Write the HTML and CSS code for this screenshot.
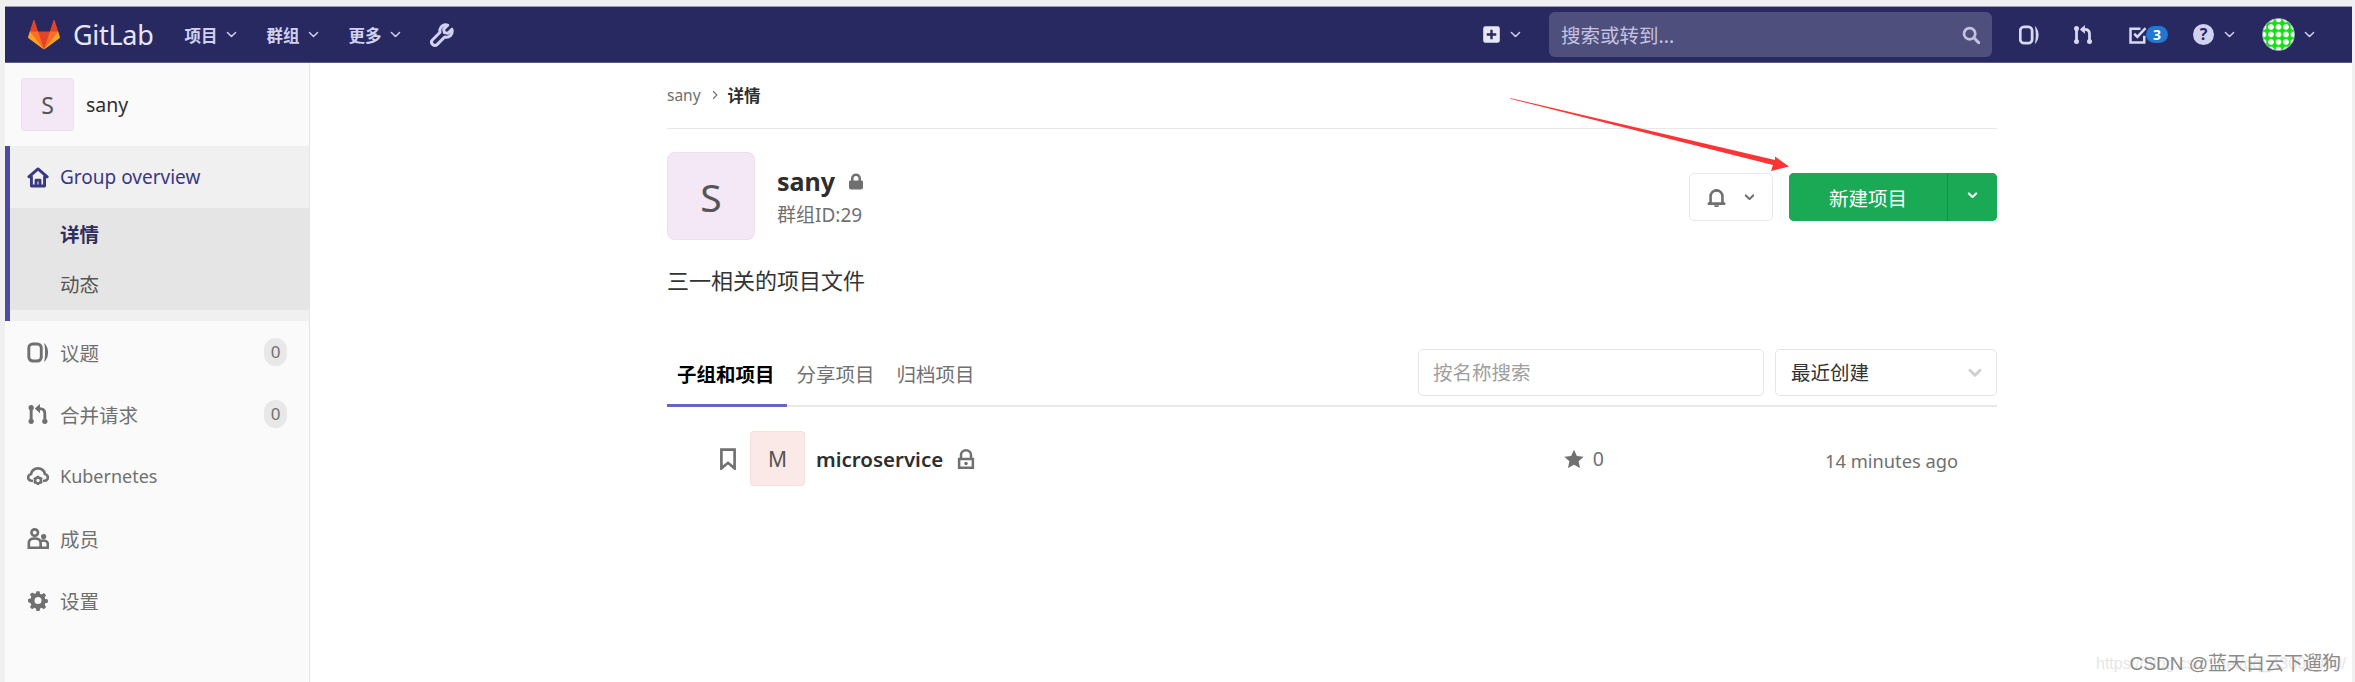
FILE: index.html
```html
<!DOCTYPE html>
<html lang="zh-CN">
<head>
    <meta charset="UTF-8">
    <title>sany · GitLab</title>
    <link rel="stylesheet" href="styles.css">
</head>
<body>
    <svg class="icon-defs" width="0" height="0">
        <symbol id="i-chevron" viewBox="0 0 16 16"><path d="M3 5.500l5 5 5-5" fill="none" stroke="currentColor" stroke-width="1.800" stroke-linecap="round" stroke-linejoin="round"/></symbol>
        <symbol id="i-chevron-bold" viewBox="0 0 16 16"><path d="M3.500 5.500L8 10l4.500-4.500" fill="none" stroke="currentColor" stroke-width="2.600" stroke-linecap="round" stroke-linejoin="round"/></symbol>
        <symbol id="i-issues" viewBox="0 0 16 16"><rect x="1" y="1.500" width="9.500" height="13" rx="3" fill="none" stroke="currentColor" stroke-width="2.200"/><path d="M13.500 2.500c1.200 1.500 1.700 3.500 1.700 5.500s-.5 4-1.700 5.500c.3-1.800.4-3.600.4-5.500s-.1-3.700-.4-5.500z" fill="currentColor" stroke="currentColor" stroke-width="1"/></symbol>
        <symbol id="i-mr" viewBox="0 0 16 16"><g fill="currentColor"><circle cx="2.800" cy="2.800" r="2"/><circle cx="2.800" cy="13.200" r="2"/><circle cx="13.200" cy="13.200" r="2"/><path d="M9.500 0v7L5.500 3.500z"/></g><path d="M2.800 3v10M13.200 13V7c0-2-1-3.500-4-3.500" fill="none" stroke="currentColor" stroke-width="2.200"/></symbol>
        <symbol id="i-home" viewBox="0 0 16 16"><path d="M8 1.500L15 7.500h-2v7H3v-7H1zM6.500 14.500V10h3v4.500" fill="none" stroke="currentColor" stroke-width="2.200" stroke-linejoin="round"/></symbol>
        <symbol id="i-cloud" viewBox="0 0 16 16"><path d="M3.500 11.200H3A2.500 2.500 0 0 1 1 7.200c.4-.6 1-1 1.700-1.100C3.300 3.600 5.400 1.800 8 1.800s4.700 1.800 5.300 4.300c.7.100 1.300.5 1.700 1.100a2.500 2.500 0 0 1-2 4h-.5" fill="none" stroke="currentColor" stroke-width="2" stroke-linecap="round"/><circle cx="8" cy="11" r="2.200" fill="none" stroke="currentColor" stroke-width="1.800"/><path d="M8 7.500v1.300M8 13.200v1.300M4.700 9.200l1.200.7M10.100 12.100l1.200.7M11.300 9.200l-1.200.7M5.900 12.100l-1.200.7" stroke="currentColor" stroke-width="1.500"/></symbol>
        <symbol id="i-users" viewBox="0 0 16 16"><circle cx="5.500" cy="3.500" r="2.500" fill="none" stroke="currentColor" stroke-width="2"/><circle cx="12.300" cy="6.500" r="2" fill="currentColor"/><path d="M1 15v-3.500C1 9.500 2.500 8 5.500 8s4.500 1.500 4.500 3.500V15zM10 15h5.500v-2.500c0-1.600-1.200-3-3.200-3-.9 0-1.600.2-2.300.7" fill="none" stroke="currentColor" stroke-width="2"/></symbol>
        <symbol id="i-gear" viewBox="-1 -1 18 18"><path fill="currentColor" fill-rule="evenodd" d="M6.700 0h2.600l.5 2.200 1.300.6 2-1.200 1.800 1.800-1.200 2 .6 1.300 2.200.5v2.600l-2.200.5-.6 1.300 1.200 2-1.800 1.800-2-1.200-1.300.6-.5 2.200H6.700l-.5-2.200-1.300-.6-2 1.200-1.800-1.800 1.200-2-.6-1.300L-.5 9.300V6.700l2.200-.5.6-1.300-1.200-2 1.800-1.800 2 1.200 1.300-.6zM8 5a3 3 0 1 0 0 6 3 3 0 0 0 0-6z"/></symbol>
        <symbol id="i-lock-solid" viewBox="0 0 16 16"><path fill="currentColor" fill-rule="evenodd" d="M3 7V5a5 5 0 0 1 10 0v2h.5c.8 0 1.500.7 1.500 1.500V14c0 1.100-.9 2-2 2H3c-1.100 0-2-.9-2-2V8.500C1 7.700 1.700 7 2.500 7zm2.500 0h5V5a2.500 2.500 0 0 0-5 0z"/></symbol>
        <symbol id="i-lock-open" viewBox="0 0 16 16"><path fill="currentColor" fill-rule="evenodd" d="M3 7V5a5 5 0 0 1 10 0v2h1.500v9h-13V7zm2 0h6V5a3 3 0 0 0-6 0zM3.500 9v5h9V9z"/><circle cx="8" cy="11.500" r="1.400" fill="currentColor"/></symbol>
    </svg>

    <div class="screen">
        <!-- top bar -->
        <header class="navbar">
            <div class="nav-left">
                <a class="brand">
                    <svg class="tanuki" viewBox="0 0 36 36">
                        <path fill="#e24329" d="M2 14l9.380 9v-9l-4-12.280c-.205-.632-1.176-.632-1.380 0z"/>
                        <path fill="#e24329" d="M34 14l-9.380 9v-9l4-12.280c.205-.632 1.176-.632 1.380 0z"/>
                        <path fill="#e24329" d="M18 34.380L3 14h30z"/>
                        <path fill="#fc6d26" d="M18 34.380L11.380 14H2l4 11z"/>
                        <path fill="#fc6d26" d="M18 34.380L24.620 14H34l-4 11z"/>
                        <path fill="#fca326" d="M2 14L.1 20.160c-.18.565 0 1.200.5 1.560l17.420 12.660z"/>
                        <path fill="#fca326" d="M34 14l1.900 6.160c.18.565 0 1.200-.5 1.560L18 34.380z"/>
                    </svg>
                    <span class="brand-name">GitLab</span>
                </a>
                <a class="nav-link">项目<svg class="caret"><use href="#i-chevron"/></svg></a>
                <a class="nav-link">群组<svg class="caret"><use href="#i-chevron"/></svg></a>
                <a class="nav-link">更多<svg class="caret"><use href="#i-chevron"/></svg></a>
                <svg class="wrench" viewBox="0 0 16 16"><path d="M14.600 4.200l-2.700 2.700-2.300-.5-.5-2.300 2.700-2.700c-2.200-.7-4.800.4-5.200 3-.1.700 0 1.300.1 1.800L1.600 11.300c-.8.800-.8 2 0 2.800l.3.300c.8.800 2 .8 2.800 0l5.100-5.100c2.800.7 5.800-1.400 4.800-5.100z" fill="none" stroke="currentColor" stroke-width="2" stroke-linejoin="round"/></svg>
            </div>
            <div class="nav-right">
                <div class="new-menu">
                    <svg class="plus-box" viewBox="0 0 16 16"><path fill="currentColor" fill-rule="evenodd" d="M3 1h10a2 2 0 0 1 2 2v10a2 2 0 0 1-2 2H3a2 2 0 0 1-2-2V3a2 2 0 0 1 2-2zm4 3v3H4v2h3v3h2V9h3V7H9V4z"/></svg>
                    <svg class="caret"><use href="#i-chevron"/></svg>
                </div>
                <div class="nav-search">
                    <span>搜索或转到...</span>
                    <svg class="search-icon" viewBox="0 0 16 16"><circle cx="6.800" cy="6.800" r="5" fill="none" stroke="currentColor" stroke-width="2.400"/><path d="M10.500 10.500L15 15" stroke="currentColor" stroke-width="2.600" stroke-linecap="round"/></svg>
                </div>
                <svg class="nav-icon nav-issues"><use href="#i-issues"/></svg>
                <svg class="nav-icon nav-mr"><use href="#i-mr"/></svg>
                <div class="todos">
                    <svg class="nav-icon" viewBox="0 0 16 16"><path d="M13 8.500V14H2V3h8" fill="none" stroke="currentColor" stroke-width="2"/><path d="M5 7l2.500 2.500L14 2.500" fill="none" stroke="currentColor" stroke-width="2"/></svg>
                    <span class="todo-badge">3</span>
                </div>
                <div class="help">
                    <span class="help-mark">?</span>
                    <svg class="caret"><use href="#i-chevron"/></svg>
                </div>
                <div class="user-menu">
                    <span class="user-avatar"></span>
                    <svg class="caret"><use href="#i-chevron"/></svg>
                </div>
            </div>
        </header>

        <div class="layout">
            <!-- left sidebar -->
            <aside class="sidebar">
                <div class="context">
                    <span class="avatar avatar-side">S</span>
                    <span class="context-name">sany</span>
                </div>
                <div class="nav-section">
                    <a class="side-item side-item-active"><svg class="side-icon"><use href="#i-home"/></svg>Group overview</a>
                    <ul class="side-sub">
                        <li class="sub-active">详情</li>
                        <li>动态</li>
                    </ul>
                </div>
                <a class="side-item"><svg class="side-icon"><use href="#i-issues"/></svg>议题<span class="count">0</span></a>
                <a class="side-item"><svg class="side-icon"><use href="#i-mr"/></svg>合并请求<span class="count">0</span></a>
                <a class="side-item side-latin"><svg class="side-icon"><use href="#i-cloud"/></svg>Kubernetes</a>
                <a class="side-item"><svg class="side-icon"><use href="#i-users"/></svg>成员</a>
                <a class="side-item"><svg class="side-icon"><use href="#i-gear"/></svg>设置</a>
            </aside>

            <main class="content">
                <div class="container">
                    <nav class="breadcrumb">
                        <span class="crumb">sany</span>
                        <svg class="crumb-sep" viewBox="0 0 16 16"><path d="M5.500 3l5 5-5 5" fill="none" stroke="currentColor" stroke-width="1.500"/></svg>
                        <span class="crumb-current">详情</span>
                    </nav>

                    <section class="group-head">
                        <span class="avatar avatar-group">S</span>
                        <div class="group-info">
                            <h1 class="group-name">sany<svg class="group-lock"><use href="#i-lock-solid"/></svg></h1>
                            <div class="group-id">群组ID:29</div>
                        </div>
                        <div class="group-actions">
                            <button class="bell-btn">
                                <svg class="bell" viewBox="0 0 16 16"><path d="M3 12V7a5 5 0 0 1 10 0v5l1.500 1.200h-13z" fill="none" stroke="currentColor" stroke-width="2.200" stroke-linejoin="round"/><path d="M6 14.500h4a2 2 0 0 1-4 0zM7 1h2v2H7z" fill="currentColor"/></svg>
                                <svg class="caret-bold"><use href="#i-chevron-bold"/></svg>
                            </button>
                            <div class="split-btn">
                                <button class="new-project">新建项目</button>
                                <button class="new-toggle"><svg class="caret-bold"><use href="#i-chevron-bold"/></svg></button>
                            </div>
                        </div>
                    </section>

                    <p class="group-desc">三一相关的项目文件</p>

                    <div class="tabs">
                        <ul class="tab-list">
                            <li class="tab tab-active">子组和项目</li>
                            <li class="tab">分享项目</li>
                            <li class="tab">归档项目</li>
                        </ul>
                        <div class="filters">
                            <div class="filter-input">按名称搜索</div>
                            <div class="filter-select">最近创建<svg class="select-caret"><use href="#i-chevron-bold"/></svg></div>
                        </div>
                    </div>

                    <div class="project-row">
                        <svg class="bookmark" viewBox="0 0 16 20"><path d="M2 1.500h12v17l-6-5-6 5z" fill="none" stroke="currentColor" stroke-width="2.400"/></svg>
                        <span class="avatar avatar-project">M</span>
                        <span class="project-name">microservice</span>
                        <svg class="project-lock"><use href="#i-lock-open"/></svg>
                        <span class="project-stars">
                            <svg class="star" viewBox="0 0 16 16"><path fill="currentColor" d="M8 .5l2.300 5 5.400.6-4 3.700 1.100 5.400L8 12.500l-4.800 2.700 1.100-5.400-4-3.700 5.400-.6z"/></svg>
                            0
                        </span>
                        <span class="project-time">14 minutes ago</span>
                    </div>
                </div>
            </main>
        </div>

        <div class="watermark">
            <span class="watermark-url">https://blog.csdn.net/qq_43000000/</span>
            <span class="watermark-name">CSDN @蓝天白云下遛狗</span>
        </div>
    </div>

    <!-- red annotation arrow drawn over the page -->
    <svg class="annotation" viewBox="0 0 2355 682">
        <path fill="#fb3535" d="M1510 98L1511 99 1773 165 1771 171 1789 166.500 1775 156.500 1775 160z"/>
    </svg>
</body>
</html>
```

FILE: styles.css
```css
* {
    box-sizing: border-box;
}
html, body {
    margin: 0;
    height: 100%;
    overflow: hidden;
}
body {
    font-family: "Noto Sans", "Noto Sans CJK SC", sans-serif;
    font-size: 19.5px;
    color: #2e2e2e;
    background-color: #f0f0f0;
}
ul {
    list-style: none;
    margin: 0;
    padding: 0;
}
button {
    font-family: inherit;
    cursor: pointer;
}
.icon-defs {
    display: block;
    height: 0;
}
.screen {
    position: relative;
    height: 682px;
    padding: 6px 3px 0 5px;
    overflow: hidden;
}

/* top bar */
.navbar {
    display: flex;
    align-items: center;
    justify-content: space-between;
    height: 57px;
    background-color: #292961;
    border-top: 1px solid #9a9ab0;
    border-bottom: 1px solid #5c5c86;
    color: #d1d1f0;
}
.nav-left,
.nav-right {
    display: flex;
    align-items: center;
}
.brand {
    display: flex;
    align-items: center;
    gap: 12px;
    margin-left: 22px;
    margin-right: 31px;
}
.tanuki {
    width: 34px;
    height: 32px;
}
.brand-name {
    font-size: 27px;
    color: #e6e6f5;
    letter-spacing: -.3px;
}
.nav-link {
    display: flex;
    align-items: center;
    gap: 8px;
    margin-right: 28px;
    font-size: 16.5px;
    font-weight: 700;
}
.caret {
    width: 13px;
    height: 13px;
}
.wrench {
    width: 24px;
    height: 24px;
}
.nav-right {
    padding-right: 36px;
}
.new-menu {
    display: flex;
    align-items: center;
    gap: 8px;
    margin-right: 27px;
}
.plus-box {
    width: 19px;
    height: 19px;
    color: #e6e6f5;
}
.nav-search {
    display: flex;
    align-items: center;
    justify-content: space-between;
    width: 443px;
    height: 45px;
    padding: 0 12px;
    margin-right: 27px;
    border-radius: 6px;
    background-color: #4f4f7e;
    color: #c3c3e0;
}
.search-icon {
    width: 18px;
    height: 18px;
}
.nav-icon {
    width: 20px;
    height: 20px;
    color: #d8d8f0;
}
.nav-issues {
    margin-right: 34px;
}
.nav-mr {
    margin-right: 35px;
}
.todos {
    display: flex;
    align-items: center;
    margin-right: 25px;
}
.todo-badge {
    width: 22px;
    height: 17px;
    margin-left: -2px;
    border-radius: 9px;
    background-color: #1f78d1;
    color: #fff;
    font-size: 14px;
    font-weight: 700;
    line-height: 17px;
    text-align: center;
}
.help {
    display: flex;
    align-items: center;
    gap: 9px;
    margin-right: 26px;
}
.help-mark {
    width: 21px;
    height: 21px;
    border-radius: 50%;
    background-color: #d1d1f0;
    color: #292961;
    font-size: 16px;
    font-weight: 700;
    line-height: 21px;
    text-align: center;
}
.user-menu {
    display: flex;
    align-items: center;
    gap: 8px;
}
.user-avatar {
    width: 33px;
    height: 33px;
    border-radius: 50%;
    border: 1px solid #a8a8c8;
    background-color: #12e012;
    background-image: radial-gradient(circle, #fff 2.4px, transparent 3.2px);
    background-size: 7.500px 7.500px;
    background-position: center;
}

/* layout */
.layout {
    display: flex;
    height: 619px;
    background-color: #fff;
}
.sidebar {
    flex: none;
    width: 305px;
    background-color: #fafafa;
    border-right: 1px solid #e5e5e5;
}
.avatar {
    display: flex;
    align-items: center;
    justify-content: center;
    flex: none;
    border: 1px solid rgba(0, 0, 0, .03);
    color: #555;
}
.context {
    display: flex;
    align-items: center;
    gap: 12px;
    height: 83px;
    padding-left: 16px;
}
.avatar-side {
    width: 53px;
    height: 53px;
    border-radius: 4px;
    background-color: #f4e7f6;
    font-size: 23px;
}
.context-name {
    color: #2e2e2e;
}
.nav-section {
    padding-bottom: 11px;
    background-color: #f0f0f0;
    border-left: 5px solid #4b4ba3;
}
.side-item {
    display: flex;
    align-items: center;
    height: 62px;
    padding-left: 22px;
    padding-right: 22px;
    color: #707070;
}
.side-item-active {
    padding-left: 17px;
    font-size: 19px;
    color: #393982;
}
.side-latin {
    font-size: 18px;
}
.side-icon {
    flex: none;
    width: 22px;
    height: 21px;
    margin-right: 11px;
}
.side-sub {
    padding: 0;
    background-color: #e5e5e5;
}
.side-sub li {
    height: 51px;
    padding-left: 50px;
    line-height: 51px;
    color: #555;
}
.side-sub .sub-active {
    font-weight: 700;
    line-height: 53px;
    color: #2e2e5f;
}
.count {
    width: 23px;
    height: 28px;
    margin-left: auto;
    border-radius: 12px;
    background-color: #e8e8e8;
    font-size: 17px;
    line-height: 28px;
    text-align: center;
}

/* main column */
.content {
    flex: 1;
    padding-left: 357px;
}
.container {
    width: 1330px;
}
.breadcrumb {
    display: flex;
    align-items: center;
    height: 66px;
    padding-bottom: 2px;
    border-bottom: 1px solid #e8e8e8;
}
.crumb {
    font-size: 15.500px;
    color: #707070;
}
.crumb-sep {
    width: 12px;
    height: 12px;
    margin: 0 7px 0 8px;
    color: #707070;
}
.crumb-current {
    font-size: 16.500px;
    font-weight: 700;
}
.group-head {
    display: flex;
    align-items: flex-start;
    padding-top: 23px;
}
.avatar-group {
    width: 88px;
    height: 88px;
    border-radius: 8px;
    background-color: #f4e7f6;
    font-size: 39px;
}
.group-info {
    margin-left: 22px;
}
.group-name {
    display: flex;
    align-items: center;
    gap: 13px;
    margin: 10px 0 0;
    font-size: 25px;
    font-weight: 700;
    line-height: 38px;
}
.group-lock {
    width: 16px;
    height: 19px;
    color: #707070;
}
.group-id {
    font-size: 19px;
    line-height: 30px;
    color: #707070;
}
.group-actions {
    display: flex;
    gap: 16px;
    margin-left: auto;
    margin-top: 21px;
}
.bell-btn {
    display: flex;
    align-items: center;
    justify-content: center;
    gap: 17px;
    width: 84px;
    height: 48px;
    padding: 0;
    background-color: #fff;
    border: 1px solid #e8e8e8;
    border-radius: 5px;
    color: #707070;
}
.bell {
    width: 19px;
    height: 19px;
}
.caret-bold {
    width: 13px;
    height: 13px;
}
.split-btn {
    display: flex;
    height: 48px;
    border-radius: 5px;
    overflow: hidden;
    background-color: #1aaa55;
}
.new-project,
.new-toggle {
    height: 48px;
    padding: 0;
    border: none;
    background-color: #1aaa55;
    color: #fff;
}
.new-project {
    width: 159px;
    font-size: 19.500px;
    border-right: 1px solid #168f48;
}
.new-toggle {
    width: 49px;
}
.group-desc {
    margin: 0;
    padding-top: 23px;
    font-size: 22px;
    line-height: 34px;
    color: #333;
}

/* tabs */
.tabs {
    display: flex;
    justify-content: space-between;
    align-items: flex-end;
    height: 108px;
    margin-top: 2px;
    border-bottom: 2px solid #e8e8e8;
}
.tab-list {
    display: flex;
}
.tab {
    height: 62px;
    margin-bottom: -2px;
    padding: 0 12px 0 10px;
    line-height: 60px;
    color: #707070;
}
.tab-active {
    padding: 0 12px 0 10px;
    font-weight: 700;
    color: #000;
    border-bottom: 3px solid #6666c4;
}
.filters {
    display: flex;
    gap: 11px;
    padding-bottom: 9px;
}
.filter-input,
.filter-select {
    height: 47px;
    background-color: #fff;
    border: 1px solid #e5e5e5;
    border-radius: 5px;
    line-height: 45px;
}
.filter-input {
    width: 346px;
    padding-left: 14px;
    color: #a0a0a0;
}
.filter-select {
    display: flex;
    align-items: center;
    justify-content: space-between;
    width: 222px;
    padding: 0 12px 0 15px;
    color: #333;
}
.select-caret {
    width: 18px;
    height: 18px;
    color: #cfcfcf;
}

/* project row */
.project-row {
    display: flex;
    align-items: center;
    padding: 24px 41px 0 52px;
}
.bookmark {
    width: 18px;
    height: 22px;
    color: #707070;
}
.avatar-project {
    width: 55px;
    height: 55px;
    margin-left: 13px;
    border-radius: 4px;
    background-color: #fbe9e7;
    font-size: 21px;
}
.project-name {
    margin-left: 11px;
    font-size: 20.500px;
    font-weight: 600;
}
.project-lock {
    width: 20px;
    height: 24px;
    margin-left: 13px;
    color: #707070;
}
.project-stars {
    display: flex;
    align-items: center;
    gap: 9px;
    margin-left: auto;
    color: #707070;
}
.star {
    width: 20px;
    height: 20px;
}
.project-time {
    width: 131px;
    margin-left: 221px;
    padding-top: 3px;
    font-size: 18.300px;
    color: #707070;
    white-space: nowrap;
}

/* blog watermark sits over the page corner */
.watermark {
    position: absolute;
    right: 14px;
    bottom: 4px;
    font-family: "Liberation Sans", "Noto Sans CJK SC", sans-serif;
    font-size: 19px;
    line-height: 28px;
    color: #8a8a8a;
}
.watermark-url {
    position: absolute;
    right: -5px;
    font-size: 16px;
    color: #e6e6e6;
    white-space: nowrap;
}
.watermark-name {
    position: relative;
}
.annotation {
    position: absolute;
    top: 0;
    left: 0;
    width: 2355px;
    height: 682px;
    pointer-events: none;
}
```
